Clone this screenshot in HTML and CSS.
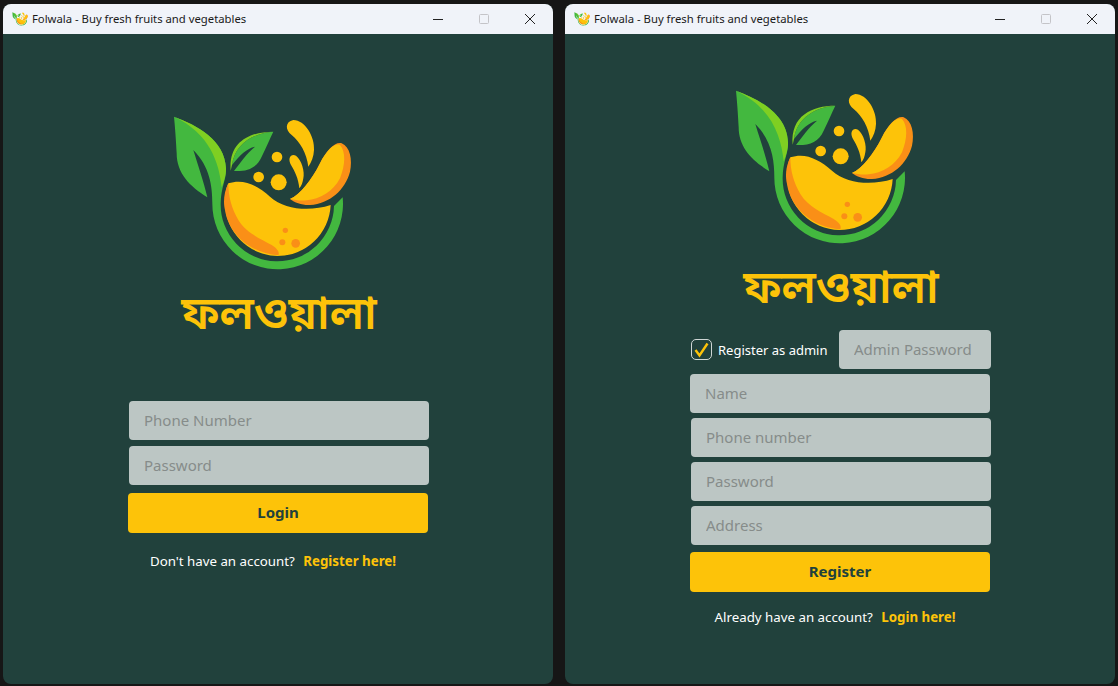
FILE: index.html
```html
<!DOCTYPE html>
<html lang="en">
<head>
    <meta charset="UTF-8">
    <title>Folwala</title>
    <link rel="stylesheet" href="styles.css">
</head>
<body>
    <!-- logo artwork, reused in both windows and the title bars -->
    <svg class="defs" width="0" height="0">
        <symbol id="logo" viewBox="0 0 690 510">
            <path fill="#43b83f" d="M42 50C110 75 195 120 198 205C199 240 183 260 182 310A170 170 0 0 0 522 318L548 292A196 196 0 1 1 157 310C157 260 150 200 100 150C115 200 130 240 142 292C90 260 50 220 50 160C48 120 45 80 42 50Z"/>
            <path fill="#7fcf22" d="M42 50C110 75 195 120 198 205C199 225 190 250 185 262C178 190 150 100 42 50Z"/>
            <path fill="#43b83f" d="M340 95C280 100 225 130 216 195C240 165 260 145 285 140C260 160 240 190 222 213C260 215 290 205 305 170C320 140 330 115 340 95Z"/>
            <path fill="#7fcf22" d="M340 95C270 95 205 125 212 212L216 195C225 130 280 100 340 95Z"/>
            <g fill="#fdc309">
                <path d="M445 200C440 160 420 125 395 105C375 90 375 65 400 60C435 60 465 110 462 150C461 170 455 185 445 200Z"/>
                <path d="M418 265C415 235 405 215 393 195C382 175 392 160 408 167C425 180 435 215 430 235C428 248 425 258 418 265Z"/>
                <circle cx="351" cy="171" r="16"/>
                <circle cx="296" cy="231" r="16"/>
                <circle cx="356" cy="247" r="24"/>
            </g>
            <path fill="#fa8f17" d="M390 297C420 285 455 240 480 190C500 150 525 125 545 130C570 140 578 180 570 215C555 270 510 310 450 315C425 316 405 308 390 297Z"/>
            <path fill="#fdc309" d="M390 297C420 285 455 240 480 190C500 150 525 128 540 135C558 155 556 195 540 235C520 275 480 297 440 301C420 303 405 300 390 297Z"/>
            <path fill="#fdc309" d="M205 250C250 235 290 255 330 290C375 330 450 335 512 315A160 160 0 0 1 352 468A160 160 0 0 1 195 310C195 285 198 265 205 250Z"/>
            <path fill="#fa8f17" d="M205 250C190 280 190 310 195 330C205 400 270 460 355 466C360 455 350 445 335 435C300 415 260 400 235 360C215 325 205 290 205 250Z"/>
            <g fill="#fa8f17">
                <circle cx="376" cy="391" r="8"/>
                <circle cx="367" cy="427" r="9"/>
                <circle cx="407" cy="430" r="13"/>
            </g>
        </symbol>
    </svg>

    <section class="window">
        <header class="titlebar">
            <svg class="app-icon" viewBox="30 40 550 480"><use href="#logo" width="690" height="510"/></svg>
            <span class="app-title">Folwala - Buy fresh fruits and vegetables</span>
            <div class="win-buttons">
                <svg class="win-btn" viewBox="0 0 12 12"><path d="M1 6.5H11" stroke="#222"/></svg>
                <svg class="win-btn" viewBox="0 0 12 12"><rect x="1.5" y="1.5" width="9" height="9" rx="1" fill="none" stroke="#c4c4c8"/></svg>
                <svg class="win-btn" viewBox="0 0 12 12"><path d="M1 1L11 11M11 1L1 11" stroke="#222"/></svg>
            </div>
        </header>
        <main class="content content-login">
            <svg class="logo"><use href="#logo"/></svg>
            <div class="wordmark">ফলওয়ালা</div>
            <form class="form form-login">
                <input class="field nudge" type="text" placeholder="Phone Number">
                <input class="field nudge" type="password" placeholder="Password">
                <button class="submit" type="button">Login</button>
            </form>
            <p class="switch">Don't have an account? <a href="#">Register here!</a></p>
        </main>
    </section>

    <section class="window">
        <header class="titlebar">
            <svg class="app-icon" viewBox="30 40 550 480"><use href="#logo" width="690" height="510"/></svg>
            <span class="app-title">Folwala - Buy fresh fruits and vegetables</span>
            <div class="win-buttons">
                <svg class="win-btn" viewBox="0 0 12 12"><path d="M1 6.5H11" stroke="#222"/></svg>
                <svg class="win-btn" viewBox="0 0 12 12"><rect x="1.5" y="1.5" width="9" height="9" rx="1" fill="none" stroke="#c4c4c8"/></svg>
                <svg class="win-btn" viewBox="0 0 12 12"><path d="M1 1L11 11M11 1L1 11" stroke="#222"/></svg>
            </div>
        </header>
        <main class="content content-register">
            <svg class="logo"><use href="#logo"/></svg>
            <div class="wordmark">ফলওয়ালা</div>
            <form class="form form-register">
                <div class="admin-row">
                    <span class="checkbox">
                        <svg viewBox="0 0 19 19"><path d="M3.5 10L7.5 15.5L15.5 3.5" fill="none" stroke="#fdc309" stroke-width="2.4"/></svg>
                    </span>
                    <span class="admin-label">Register as admin</span>
                    <input class="field field-admin" type="password" placeholder="Admin Password">
                </div>
                <input class="field" type="text" placeholder="Name">
                <input class="field nudge" type="text" placeholder="Phone number">
                <input class="field nudge" type="password" placeholder="Password">
                <input class="field nudge" type="text" placeholder="Address">
                <button class="submit" type="button">Register</button>
            </form>
            <p class="switch switch-register">Already have an account? <a href="#">Login here!</a></p>
        </main>
    </section>
</body>
</html>
```

FILE: styles.css
```css
* {
    box-sizing: border-box;
}

html, body {
    height: 100%;
}

body {
    margin: 0;
    padding: 4px 2px 2px 3px;
    display: flex;
    gap: 12px;
    background: #161616;
    font-family: 'Noto Sans', 'Open Sans', sans-serif;
    overflow: hidden;
}

.defs {
    position: absolute;
}

.window {
    width: 550px;
    height: 680px;
    display: flex;
    flex-direction: column;
    border-radius: 8px;
    overflow: hidden;
    background: #21413c;
}

.titlebar {
    height: 30px;
    flex: none;
    display: flex;
    align-items: center;
    padding-left: 9px;
    background: #f0f3f9;
}

.app-icon {
    width: 16px;
    height: 14px;
    margin-right: 4px;
}

.app-title {
    padding-bottom: 2px;
    font-size: 11.3px;
    color: #1a1a1a;
}

.win-buttons {
    margin-left: auto;
    margin-right: 17px;
    display: flex;
    gap: 34px;
}

.win-btn {
    width: 12px;
    height: 12px;
}

.content {
    flex: 1;
    display: flex;
    flex-direction: column;
    align-items: center;
}

.content-login {
    padding-top: 66px;
}

.content-register {
    padding-top: 40px;
}

.logo {
    width: 230px;
    height: 170px;
    margin-right: 6px;
    flex: none;
}

.wordmark {
    height: 38px;
    margin-top: 27px;
    margin-left: 2px;
    font-family: 'Noto Sans Bengali', 'Noto Sans', sans-serif;
    font-size: 46px;
    line-height: 42px;
    font-weight: 600;
    color: #fdc309;
}

.form {
    width: 300px;
    display: flex;
    flex-direction: column;
}

.form-login {
    margin-top: 66px;
    gap: 6px;
}

.form-register {
    margin-top: 21px;
    gap: 5px;
}

.field {
    width: 300px;
    height: 39px;
    flex: none;
    padding: 0 15px 2px;
    border: 0;
    border-radius: 4px;
    background: #bcc6c4;
    font-family: inherit;
    font-size: 15px;
    color: #21413c;
}

.field::placeholder {
    color: #868c8a;
}

.nudge {
    margin-left: 1px;
}

.admin-row {
    display: flex;
    align-items: center;
    height: 39px;
}

.checkbox {
    width: 21px;
    height: 21px;
    flex: none;
    margin-left: 1px;
    border: 1px solid #cfd6d5;
    border-radius: 5px;
}

.checkbox svg {
    display: block;
    width: 19px;
    height: 19px;
}

.admin-label {
    margin-left: 6px;
    font-size: 13px;
    color: #fff;
    white-space: nowrap;
}

.field-admin {
    width: 152px;
    margin-left: auto;
    margin-right: -1px;
}

.submit {
    height: 40px;
    margin-top: 2px;
    padding: 0 0 2px;
    border: 0;
    border-radius: 4px;
    background: #fdc309;
    font-family: inherit;
    font-size: 15px;
    font-weight: 700;
    color: #21413c;
}

.switch {
    margin: 19px 10px 0 0;
    font-size: 13.3px;
    line-height: 18px;
    color: #fff;
}

.switch-register {
    margin-top: 16px;
}

.switch a {
    margin-left: 5px;
    font-weight: 700;
    color: #fdc309;
    text-decoration: none;
}
```
